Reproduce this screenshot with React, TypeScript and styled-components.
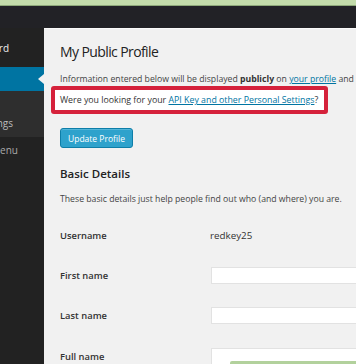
import React from 'react';
import styled, { createGlobalStyle } from 'styled-components';

const GlobalStyle = createGlobalStyle`
  html, body {
    margin: 0;
    padding: 0;
    background: #222;
  }
  body {
    font-family: 'Open Sans', 'Liberation Sans', sans-serif;
  }
`;

const rows = [
  { label: 'Username', value: 'redkey25' },
  { label: 'First name', input: true },
  { label: 'Last name', input: true },
  { label: 'Full name', input: true, select: true },
];

const App = () => {
  return (
    <Page>
      <GlobalStyle />
      <TopStrip />
      <AdminBar />
      <Body>
        <Sidebar>
          <MenuItem $pad={35} $height={39} $color="#eee">
            Dashboard
          </MenuItem>
          <ActiveItem />
          <SubMenu>
            <MenuItem $pad={31} $height={16} $color="#bbb">
              Account Settings
            </MenuItem>
          </SubMenu>
          <MenuItem $pad={26} $height={26} $color="#aaa">
            Collapse menu
          </MenuItem>
        </Sidebar>

        <Content>
          <Title>My Public Profile</Title>
          <Info>
            Information entered below will be displayed <b>publicly</b> on <Link>your profile</Link> and
          </Info>
          <Notice>
            Were you looking for your <Link>API Key and other Personal Settings</Link>?
          </Notice>
          <UpdateButton>Update Profile</UpdateButton>
          <SectionTitle>Basic Details</SectionTitle>
          <Description>These basic details just help people find out who (and where) you are.</Description>
          <Form>
            {rows.map((row) => (
              <FormRow key={row.label}>
                <Label>{row.label}</Label>
                {row.input ? (
                  <FieldBox>{row.select && <GreenSelect />}</FieldBox>
                ) : (
                  <Value>{row.value}</Value>
                )}
              </FormRow>
            ))}
          </Form>
        </Content>
      </Body>
    </Page>
  );
};

const Page = styled.div`
  width: 356px;
  height: 364px;
  overflow: hidden;
  background: #222;
  display: flex;
  flex-direction: column;
`;

const TopStrip = styled.div`
  height: 5px;
  background: #c3dcab;
  border-bottom: 1px solid #8ea97a;
  flex-shrink: 0;
`;

const AdminBar = styled.div`
  height: 22px;
  background: #222226;
  flex-shrink: 0;
`;

const Body = styled.div`
  flex: 1;
  display: flex;
  min-height: 0;
`;

const Sidebar = styled.div`
  width: 44px;
  flex-shrink: 0;
  background: #222;
  display: flex;
  flex-direction: column;
  font-size: 10px;
`;

const MenuItem = styled.div<{ $pad: number; $height: number; $color: string }>`
  height: ${(p) => p.$height}px;
  display: flex;
  align-items: center;
  justify-content: flex-end;
  padding-right: ${(p) => p.$pad}px;
  overflow: hidden;
  white-space: nowrap;
  color: ${(p) => p.$color};
`;

const ActiveItem = styled.div`
  position: relative;
  height: 24px;
  background: #0074a2;

  &::after {
    content: '';
    position: absolute;
    right: 0;
    top: 7px;
    border-top: 5px solid transparent;
    border-bottom: 5px solid transparent;
    border-right: 6px solid #f1f1f1;
  }
`;

const SubMenu = styled.div`
  height: 46px;
  background: #2e2e2e;
  display: flex;
  flex-direction: column;
  justify-content: flex-end;
  padding-bottom: 6px;
  box-sizing: border-box;
`;

const Content = styled.div`
  flex: 1;
  background: #f1f1f1;
  border-top: 1px solid #fafafa;
  padding: 10px 0 0 16px;
  color: #444;
  overflow: hidden;
  white-space: nowrap;
`;

const Title = styled.h1`
  margin: 0;
  font-size: 14px;
  letter-spacing: -0.6px;
  font-weight: 400;
  line-height: 26px;
  color: #222;
`;

const Info = styled.p`
  margin: 8px 0 0;
  font-size: 8.7px;
  line-height: 12px;

  b {
    font-weight: 700;
    color: #333;
  }
`;

const Link = styled.span`
  color: #0074a2;
  text-decoration: underline;
`;

const Notice = styled.div`
  margin: 1px 0 0 -9px;
  width: 277px;
  height: 28px;
  box-sizing: border-box;
  border: 4px solid #d5213b;
  border-radius: 3px;
  background: #fff;
  padding: 0 5px;
  line-height: 20px;
  font-size: 8.8px;
  color: #333;
`;

const UpdateButton = styled.button`
  display: block;
  margin-top: 14px;
  width: 73px;
  height: 20px;
  padding: 0;
  border: 1px solid #0e7ea8;
  border-radius: 3px;
  background: #2ea2cc;
  color: #fff;
  font-family: inherit;
  font-size: 8.5px;
  box-shadow: inset 0 1px 0 rgba(120, 200, 230, 0.5);
`;

const SectionTitle = styled.h2`
  margin: 18px 0 0;
  font-size: 11.5px;
  font-weight: 600;
  line-height: 16px;
  color: #222;
`;

const Description = styled.p`
  margin: 11px 0 0;
  font-size: 8.7px;
  line-height: 12px;
`;

const Form = styled.div`
  margin-top: 10px;
  display: flex;
  flex-direction: column;
`;

const FormRow = styled.div`
  height: 40.4px;
  display: grid;
  grid-template-columns: 150px 1fr;
  align-items: center;
`;

const Label = styled.div`
  font-size: 9.4px;
  font-weight: 600;
  color: #333;
`;

const Value = styled.div`
  font-size: 9.8px;
  color: #333;
`;

const FieldBox = styled.div`
  height: 17px;
  margin-left: 1px;
  background: #fff;
  border: 1px solid #e2e2e2;
  border-right: none;
  box-sizing: border-box;
  padding: 12px 0 0 18px;
  overflow: visible;
`;

const GreenSelect = styled.div`
  height: 12px;
  background: #b2d19c;
  border-radius: 2px 0 0 0;
`;

export default App;
